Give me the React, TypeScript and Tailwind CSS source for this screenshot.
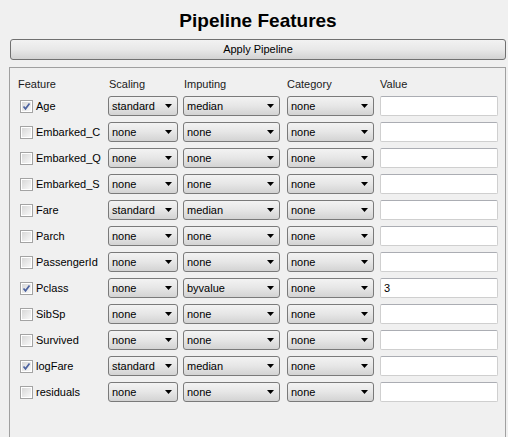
import React from "react"

type Row = {
  name: string
  checked: boolean
  scaling: string
  imputing: string
  category: string
  value: string
}

const rows: Row[] = [
  { name: "Age", checked: true, scaling: "standard", imputing: "median", category: "none", value: "" },
  { name: "Embarked_C", checked: false, scaling: "none", imputing: "none", category: "none", value: "" },
  { name: "Embarked_Q", checked: false, scaling: "none", imputing: "none", category: "none", value: "" },
  { name: "Embarked_S", checked: false, scaling: "none", imputing: "none", category: "none", value: "" },
  { name: "Fare", checked: false, scaling: "standard", imputing: "median", category: "none", value: "" },
  { name: "Parch", checked: false, scaling: "none", imputing: "none", category: "none", value: "" },
  { name: "PassengerId", checked: false, scaling: "none", imputing: "none", category: "none", value: "" },
  { name: "Pclass", checked: true, scaling: "none", imputing: "byvalue", category: "none", value: "3" },
  { name: "SibSp", checked: false, scaling: "none", imputing: "none", category: "none", value: "" },
  { name: "Survived", checked: false, scaling: "none", imputing: "none", category: "none", value: "" },
  { name: "logFare", checked: true, scaling: "standard", imputing: "median", category: "none", value: "" },
  { name: "residuals", checked: false, scaling: "none", imputing: "none", category: "none", value: "" },
]

function CheckBox({ checked }: { checked: boolean }) {
  return (
    <div className="w-[13px] h-[13px] border border-[#a3a3a3] bg-white p-px shrink-0">
      <div className="w-full h-full bg-gradient-to-br from-[#d8d8d8] to-[#f8f8f8] flex items-center justify-center">
        {checked && (
          <svg width="9" height="9" viewBox="0 0 9 9">
            <path d="M1.5 4.5 L3.5 6.8 L7.5 1.5" stroke="#4d63a0" strokeWidth="1.7" fill="none" />
          </svg>
        )}
      </div>
    </div>
  )
}

function Combo({ value, width }: { value: string; width: string }) {
  return (
    <div
      className={`${width} h-[20px] flex items-center justify-between rounded-[3px] border border-[#7a7a7a] bg-gradient-to-b from-[#f3f3f3] via-[#e6e6e6] to-[#d3d3d3] pl-[3px] pr-[5px]`}
    >
      <span className="leading-none pt-px">{value}</span>
      <svg width="7" height="4" viewBox="0 0 7 4">
        <path d="M0 0 H7 L3.5 4 Z" fill="#000" />
      </svg>
    </div>
  )
}

export default function App() {
  return (
    <div
      className="w-[508px] h-[437px] overflow-hidden bg-[#f0f0f0] text-[11px] text-black pl-[10px] pr-[2px]"
      style={{ fontFamily: '"Liberation Sans", Arial, sans-serif' }}
    >
      <h1 className="text-center text-[19px] font-bold leading-[22px] pt-[10px] h-[39px]">Pipeline Features</h1>

      <button className="w-full h-[21px] rounded-[3px] border border-[#707070] bg-gradient-to-b from-[#f2f2f2] via-[#e8e8e8] to-[#d2d2d2] text-[11px] leading-none">
        Apply Pipeline
      </button>

      <div className="mt-[7px] -ml-px border-t border-l border-r border-[#a0a0a0] h-[400px] pt-[10px] pl-[10px]">
        <div className="grid grid-cols-[88px_75px_104px_93px_118px] leading-[13px] text-[#1a1a1a]">
          <span className="-ml-[2px]">Feature</span>
          <span className="ml-px">Scaling</span>
          <span className="ml-px">Imputing</span>
          <span>Category</span>
          <span>Value</span>
        </div>

        <div className="mt-[5px] flex flex-col gap-[6px]">
          {rows.map((r) => (
            <div key={r.name} className="grid grid-cols-[88px_75px_104px_93px_118px] h-[20px] items-center">
              <div className="flex items-center gap-[3px]">
                <CheckBox checked={r.checked} />
                <span>{r.name}</span>
              </div>
              <Combo value={r.scaling} width="w-[70px]" />
              <Combo value={r.imputing} width="w-[97px]" />
              <Combo value={r.category} width="w-[87px]" />
              <div className="w-[118px] h-[20px] bg-white border border-[#cfcfcf] border-t-[#abadb3] rounded-[2px] flex items-center pl-[3px]">
                {r.value}
              </div>
            </div>
          ))}
        </div>
      </div>
    </div>
  )
}
